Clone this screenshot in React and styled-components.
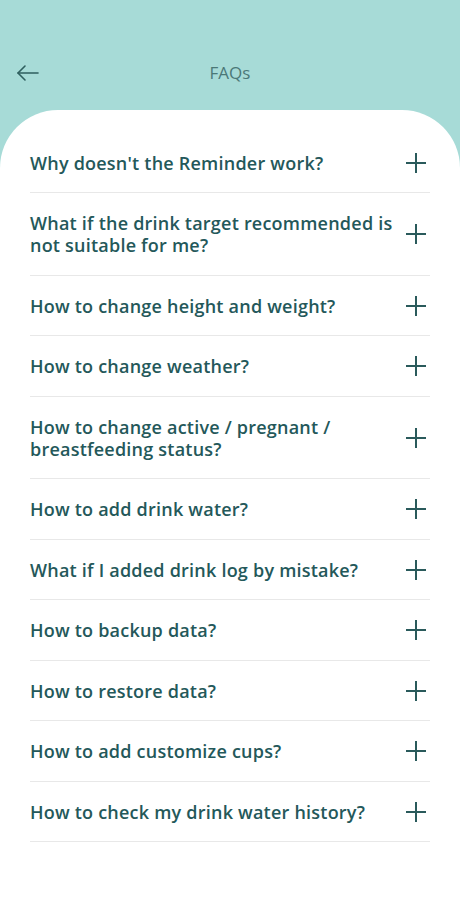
import React from "react";
import styled, { createGlobalStyle } from "styled-components";

const Global = createGlobalStyle`
  html, body { margin: 0; padding: 0; background: #a7dbd7; }
  body { font-family: "Open Sans", "Liberation Sans", sans-serif; }
  * { box-sizing: border-box; }
`;

const Page = styled.div`
  width: 460px;
  min-height: 900px;
  display: flex;
  flex-direction: column;
  background: #a7dbd7;
`;

const Header = styled.header`
  height: 110px;
  padding: 58px 16px 0 16px;
  display: grid;
  grid-template-columns: 40px 1fr 40px;
  align-items: start;
`;

const BackButton = styled.button`
  border: 0;
  background: none;
  padding: 0;
  height: 30px;
  display: flex;
  align-items: center;
  color: #2f5f5f;
  cursor: pointer;
`;

const Title = styled.h1`
  margin: 0;
  height: 30px;
  line-height: 30px;
  text-align: center;
  font-size: 17px;
  font-weight: 400;
  color: #4b7877;
`;

const Card = styled.main`
  flex: 1;
  background: #fff;
  border-radius: 58px 58px 0 0;
  padding: 22.5px 30px 40px 30px;
`;

const List = styled.ul`
  list-style: none;
  margin: 0;
  padding: 0;
`;

const Row = styled.li`
  display: flex;
  align-items: center;
  justify-content: space-between;
  padding: 19px 0 18.5px 0;
  border-bottom: 1px solid #e8e8e8;
`;

const Question = styled.span`
  max-width: 368px;
  font-size: 18px;
  line-height: 22px;
  font-weight: 600;
  color: #24585a;
  letter-spacing: 0.22px;
`;

const PlusIcon = styled.svg`
  flex: none;
  width: 22px;
  height: 22px;
  margin-right: 3px;
  color: #2a5a5b;
`;

const questions = [
  "Why doesn't the Reminder work?",
  "What if the drink target recommended is not suitable for me?",
  "How to change height and weight?",
  "How to change weather?",
  "How to change active / pregnant / breastfeeding status?",
  "How to add drink water?",
  "What if I added drink log by mistake?",
  "How to backup data?",
  "How to restore data?",
  "How to add customize cups?",
  "How to check my drink water history?",
];

const Plus = () => (
  <PlusIcon viewBox="0 0 22 22" fill="none" stroke="currentColor" strokeWidth="2">
    <line x1="11" y1="1" x2="11" y2="21" />
    <line x1="1" y1="11" x2="21" y2="11" />
  </PlusIcon>
);

export default function App() {
  return (
    <Page>
      <Global />
      <Header>
        <BackButton aria-label="Back">
          <svg width="24" height="18" viewBox="0 0 24 18" fill="none" stroke="currentColor" strokeWidth="1.6" strokeLinecap="round" strokeLinejoin="round">
            <line x1="2" y1="9" x2="22" y2="9" />
            <polyline points="9,2 2,9 9,16" />
          </svg>
        </BackButton>
        <Title>FAQs</Title>
        <span />
      </Header>
      <Card>
        <List>
          {questions.map((q) => (
            <Row key={q}>
              <Question>{q}</Question>
              <Plus />
            </Row>
          ))}
        </List>
      </Card>
    </Page>
  );
}
